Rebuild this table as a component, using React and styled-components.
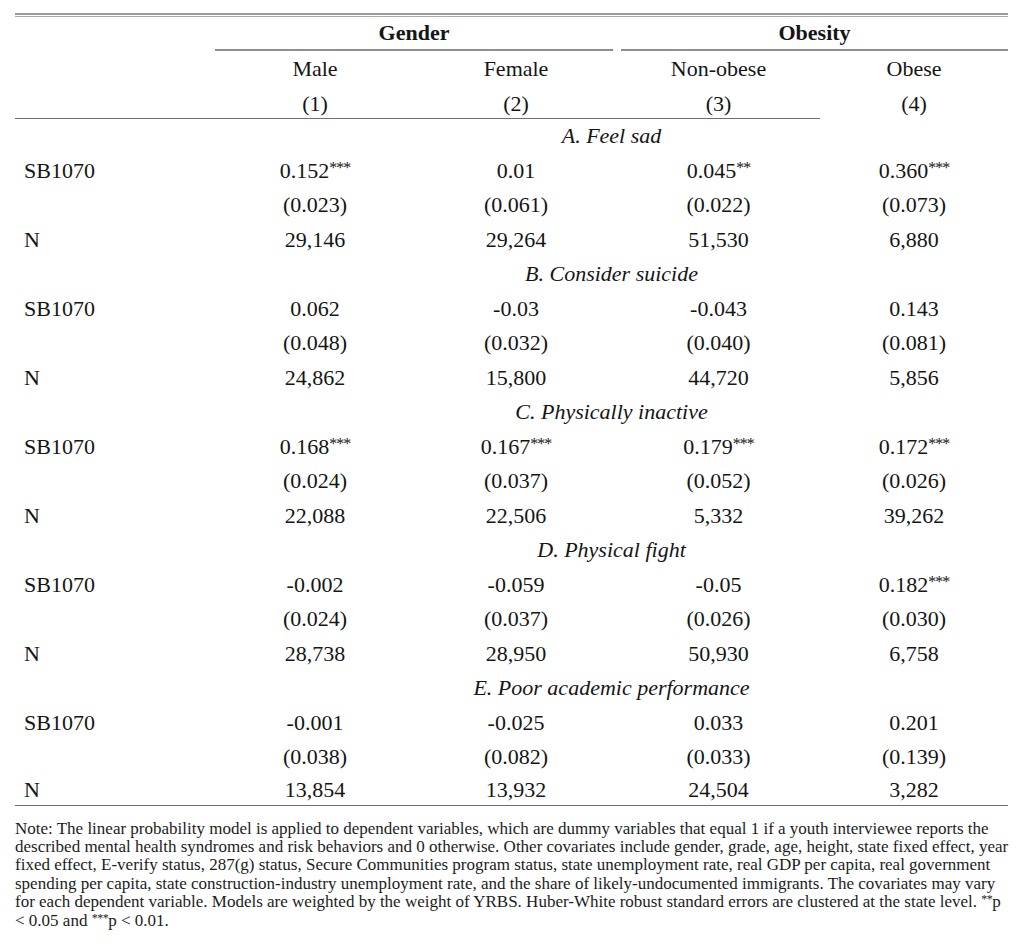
import styled, { createGlobalStyle } from 'styled-components'

const GlobalStyle = createGlobalStyle`
  html, body {
    margin: 0;
    padding: 0;
    background: #fff;
  }
  body {
    font-family: "Liberation Serif", "Times New Roman", serif;
    color: #151515;
  }
`

const sections = [
  {
    title: 'A. Feel sad',
    coef: ['0.152***', '0.01', '0.045**', '0.360***'],
    se: ['(0.023)', '(0.061)', '(0.022)', '(0.073)'],
    n: ['29,146', '29,264', '51,530', '6,880'],
  },
  {
    title: 'B. Consider suicide',
    coef: ['0.062', '-0.03', '-0.043', '0.143'],
    se: ['(0.048)', '(0.032)', '(0.040)', '(0.081)'],
    n: ['24,862', '15,800', '44,720', '5,856'],
  },
  {
    title: 'C. Physically inactive',
    coef: ['0.168***', '0.167***', '0.179***', '0.172***'],
    se: ['(0.024)', '(0.037)', '(0.052)', '(0.026)'],
    n: ['22,088', '22,506', '5,332', '39,262'],
  },
  {
    title: 'D. Physical fight',
    coef: ['-0.002', '-0.059', '-0.05', '0.182***'],
    se: ['(0.024)', '(0.037)', '(0.026)', '(0.030)'],
    n: ['28,738', '28,950', '50,930', '6,758'],
  },
  {
    title: 'E. Poor academic performance',
    coef: ['-0.001', '-0.025', '0.033', '0.201'],
    se: ['(0.038)', '(0.082)', '(0.033)', '(0.139)'],
    n: ['13,854', '13,932', '24,504', '3,282'],
  },
]

const noteLines = [
  'Note: The linear probability model is applied to dependent variables, which are dummy variables that equal 1 if a youth interviewee reports the',
  'described mental health syndromes and risk behaviors and 0 otherwise. Other covariates include gender, grade, age, height, state fixed effect, year',
  'fixed effect, E-verify status, 287(g) status, Secure Communities program status, state unemployment rate, real GDP per capita, real government',
  'spending per capita, state construction-industry unemployment rate, and the share of likely-undocumented immigrants. The covariates may vary',
]

const Frame = styled.div`
  margin: 13px 0 0 15px;
  width: 993px;
  border-top: 2px solid #9b9b9b;
  padding-top: 1px;
`

const Table = styled.table`
  width: 993px;
  table-layout: fixed;
  border-collapse: separate;
  border-spacing: 0;
  border-top: 1px solid #ababab;
  font-size: 22px;
`

const Cell = styled.td`
  padding: ${p => p.$pt || 0}px 0 0 ${p => p.$pl || 0}px;
  line-height: ${p => p.$lh || 34.5}px;
  text-align: ${p => p.$align || 'center'};
  font-style: ${p => (p.$italic ? 'italic' : 'normal')};
  border-bottom: ${p => (p.$rule ? '1px solid #6f6f6f' : 'none')};
  white-space: nowrap;
  vertical-align: top;
`

const GroupLabel = styled.div`
  font-weight: 700;
  text-align: center;
  line-height: 32px;
  border-bottom: 2px solid #8e8e8e;
  margin: ${p => (p.$side === 'left' ? '0 4px 0 0' : '0 0 0 4px')};
`

const Stars = styled.sup`
  font-size: 16px;
  line-height: 0;
  vertical-align: 5px;
  letter-spacing: -1px;
`

const Note = styled.div`
  margin: 14px 0 0 15px;
  font-size: 17px;
  line-height: 18.4px;
  color: #1c1c1c;
`

const NoteLine = styled.span`
  display: block;
  white-space: nowrap;
`

const NoteStars = styled.sup`
  font-size: 12px;
  line-height: 0;
  vertical-align: 4px;
  letter-spacing: -0.5px;
`

function Value({ text }) {
  const m = text.match(/^(.*?)(\*+)$/)
  if (!m) return text
  return (
    <>
      {m[1]}
      <Stars>{m[2]}</Stars>
    </>
  )
}

function DataRow({ label, values, last }) {
  return (
    <tr>
      <Cell $align="left" $pl={9} $lh={last ? 30 : 34.5} $rule={last}>
        {label}
      </Cell>
      {values.map((v, i) => (
        <Cell key={i} $lh={last ? 30 : 34.5} $rule={last}>
          <Value text={v} />
        </Cell>
      ))}
    </tr>
  )
}

function SectionRows({ section, isLast }) {
  return (
    <>
      <tr>
        <Cell />
        <Cell colSpan={4} $italic>
          {section.title}
        </Cell>
      </tr>
      <DataRow label="SB1070" values={section.coef} />
      <DataRow label="" values={section.se} />
      <DataRow label="N" values={section.n} last={isLast} />
    </>
  )
}

export default function App() {
  return (
    <>
      <GlobalStyle />
      <Frame>
        <Table>
          <colgroup>
            <col style={{ width: 200 }} />
            <col style={{ width: 200 }} />
            <col style={{ width: 202 }} />
            <col style={{ width: 203 }} />
            <col style={{ width: 188 }} />
          </colgroup>
          <thead>
            <tr>
              <Cell as="th" $lh={34} />
              <Cell as="th" colSpan={2} $lh={34}>
                <GroupLabel $side="left">Gender</GroupLabel>
              </Cell>
              <Cell as="th" colSpan={2} $lh={34}>
                <GroupLabel $side="right">Obesity</GroupLabel>
              </Cell>
            </tr>
            <tr>
              <Cell />
              <Cell $lh={35}>Male</Cell>
              <Cell $lh={35}>Female</Cell>
              <Cell $lh={35}>Non-obese</Cell>
              <Cell $lh={35}>Obese</Cell>
            </tr>
            <tr>
              <Cell $lh={28} $pt={4} $rule />
              <Cell $lh={28} $pt={4} $rule>(1)</Cell>
              <Cell $lh={28} $pt={4} $rule>(2)</Cell>
              <Cell $lh={28} $pt={4} $rule>(3)</Cell>
              <Cell $lh={28} $pt={4}>(4)</Cell>
            </tr>
          </thead>
          <tbody>
            {sections.map((s, si) => (
              <SectionRows key={s.title} section={s} isLast={si === sections.length - 1} />
            ))}
          </tbody>
        </Table>
      </Frame>
      <Note>
        {noteLines.map(line => (
          <NoteLine key={line}>{line}</NoteLine>
        ))}
        <NoteLine>
          for each dependent variable. Models are weighted by the weight of YRBS. Huber-White robust standard errors are clustered at the state level. <NoteStars>**</NoteStars>p
        </NoteLine>
        <NoteLine>
          &lt; 0.05 and <NoteStars>***</NoteStars>p &lt; 0.01.
        </NoteLine>
      </Note>
    </>
  )
}
